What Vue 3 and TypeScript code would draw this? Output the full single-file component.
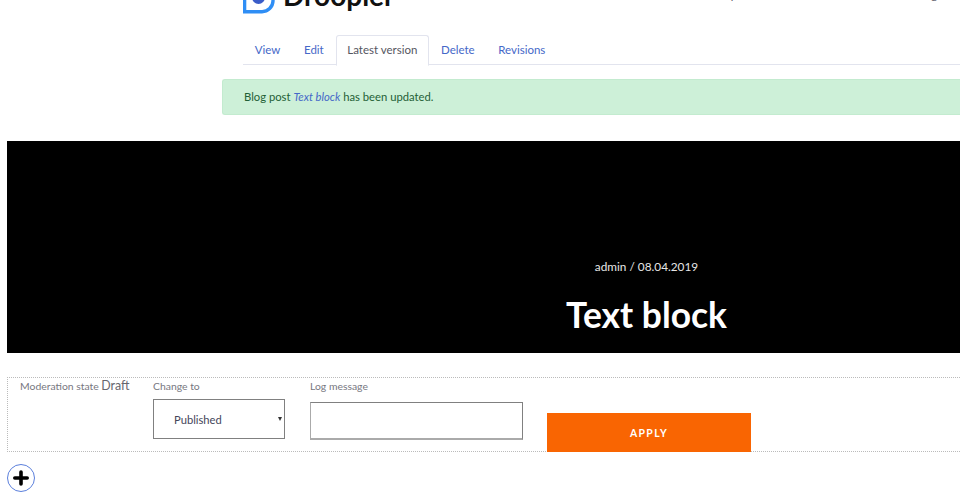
<script setup lang="ts">
const tabs = [
  { label: 'View', active: false },
  { label: 'Edit', active: false },
  { label: 'Latest version', active: true },
  { label: 'Delete', active: false },
  { label: 'Revisions', active: false },
]
const navItems = ['Shop', 'Blog']
</script>

<template>
  <div class="page">
    <header class="site-header">
      <div class="brand">
        <svg class="logo" width="32" height="14" viewBox="0 0 32 14">
          <path d="M1.6 -10 V11.7 H19 A11 11 0 0 0 30 1 V-10" fill="none" stroke="#2f8ef5" stroke-width="3.4" />
          <circle cx="15.5" cy="-2.5" r="6.5" fill="#3a5cc8" />
        </svg>
        <span class="brand-name">Droopler</span>
      </div>
      <nav class="top-nav">
        <span v-for="item in navItems" :key="item">{{ item }}</span>
      </nav>
    </header>

    <div class="tabs-wrap">
      <ul class="tabs">
        <li v-for="tab in tabs" :key="tab.label" class="tab" :class="{ active: tab.active }">{{ tab.label }}</li>
      </ul>
    </div>

    <div class="message">
      Blog post <em>Text block</em> has been updated.
    </div>

    <section class="hero">
      <div class="hero-inner">
        <div class="meta">admin / 08.04.2019</div>
        <h1>Text block</h1>
      </div>
    </section>

    <form class="moderation" @submit.prevent>
      <div class="state">
        <span class="label">Moderation state</span> <span class="state-value">Draft</span>
      </div>
      <div class="field change">
        <label class="label">Change to</label>
        <div class="select">
          <span>Published</span>
          <i class="arrow"></i>
        </div>
      </div>
      <div class="field log">
        <label class="label">Log message</label>
        <input class="input" type="text" />
      </div>
      <button class="apply">APPLY</button>
    </form>

    <button class="add" aria-label="Add">
      <svg width="16" height="16" viewBox="0 0 16 16"><path d="M8 2 V14 M1.8 8 H14.2" stroke="#000" stroke-width="3.6" stroke-linecap="round" /></svg>
    </button>
  </div>
</template>

<style>
html, body { margin: 0; background: #fff; overflow: hidden; }
</style>

<style scoped>
.page {
  width: 960px;
  height: 499px;
  overflow: hidden;
  font-family: Lato, "Open Sans", sans-serif;
  color: #5c5c66;
}
.site-header {
  height: 14px;
  display: flex;
  justify-content: space-between;
  padding-left: 243px;
  overflow: hidden;
}
.brand { display: flex; height: 14px; }
.logo { display: block; flex: none; }
.brand-name {
  margin: -23px 0 0 8px;
  font-size: 28px;
  font-weight: 700;
  line-height: 36px;
  height: 36px;
  color: #111;
}
.top-nav {
  display: flex;
  gap: 178px;
  padding-right: 23px;
  margin-top: -12px;
  height: 14px;
  font-size: 11.2px;
  line-height: 14px;
}
.tabs-wrap { padding: 22px 0 0 243px; }
.tabs {
  list-style: none;
  margin: 0;
  padding: 0;
  display: flex;
  border-bottom: 1px solid #e2e4ee;
  height: 28px;
}
.tab {
  padding: 0 11.8px;
  font-size: 11.5px;
  line-height: 27px;
  color: #4568c8;
  height: 28px;
}
.tab.active {
  color: #55565f;
  background: #fff;
  border: 1px solid #e2e4ee;
  border-bottom-color: #fff;
  border-radius: 3px 3px 0 0;
  padding: 0 10.75px;
  margin-top: -1px;
  height: 29px;
}
.message {
  box-sizing: border-box;
  margin: 14px 0 0 222px;
  height: 36px;
  line-height: 34px;
  padding-left: 21px;
  font-size: 11.25px;
  background: #cdf0d8;
  border: 1px solid #c3ebcf;
  border-right: none;
  border-radius: 3px 0 0 3px;
  color: #1f5f36;
}
.message em { color: #4568c8; }
.hero {
  margin: 26px 0 0 7px;
  height: 212px;
  background: #000;
  display: flex;
  justify-content: flex-end;
}
.hero-inner { width: 361px; text-align: center; margin-right: 133px; }
.meta {
  margin-top: 118px;
  font-size: 11.8px;
  line-height: 16px;
  color: #e6e6e6;
}
h1 {
  margin: 20px 0 0;
  font-size: 35.4px;
  line-height: 40px;
  font-weight: 700;
  color: #fff;
}
.moderation {
  margin: 24px 0 0 7px;
  height: 75px;
  border: 1px dotted #bbb;
  border-right: none;
  display: flex;
  align-items: flex-start;
  box-sizing: border-box;
  padding-left: 12px;
}
.label { font-size: 10.4px; color: #77777f; line-height: 16px; }
.state { width: 133px; line-height: 16px; font-size: 10px; }
.state-value { font-size: 12.4px; color: #66666e; }
.field { display: flex; flex-direction: column; }
.change { width: 157px; }
.select {
  margin-top: 5px;
  width: 132px;
  height: 40px;
  box-sizing: border-box;
  border: 1px solid #808080;
  display: flex;
  align-items: center;
  justify-content: space-between;
  padding: 0 2px 0 20px;
  font-size: 11.2px;
  color: #44465a;
}
.arrow {
  width: 0;
  height: 0;
  border-left: 2.5px solid transparent;
  border-right: 2.5px solid transparent;
  border-top: 4px solid #333;
}
.input {
  margin-top: 8px;
  width: 213px;
  height: 38px;
  box-sizing: border-box;
  border: 1px solid #808080;
  border-left-color: #aaa;
  border-bottom: 2px solid #aaa;
  background: #fff;
  padding: 0;
}
.apply {
  margin: 35px 0 0 24px;
  width: 204px;
  height: 39px;
  background: #f96502;
  border: none;
  color: #fff;
  font-family: inherit;
  font-size: 10.4px;
  font-weight: 700;
  letter-spacing: 1.4px;
  padding: 0;
}
.add {
  display: flex;
  align-items: center;
  justify-content: center;
  margin: 12px 0 0 7px;
  width: 28px;
  height: 28px;
  padding: 0;
  box-sizing: border-box;
  border: 1.5px solid #5b7fdc;
  border-radius: 50%;
  background: #fff;
}
</style>
